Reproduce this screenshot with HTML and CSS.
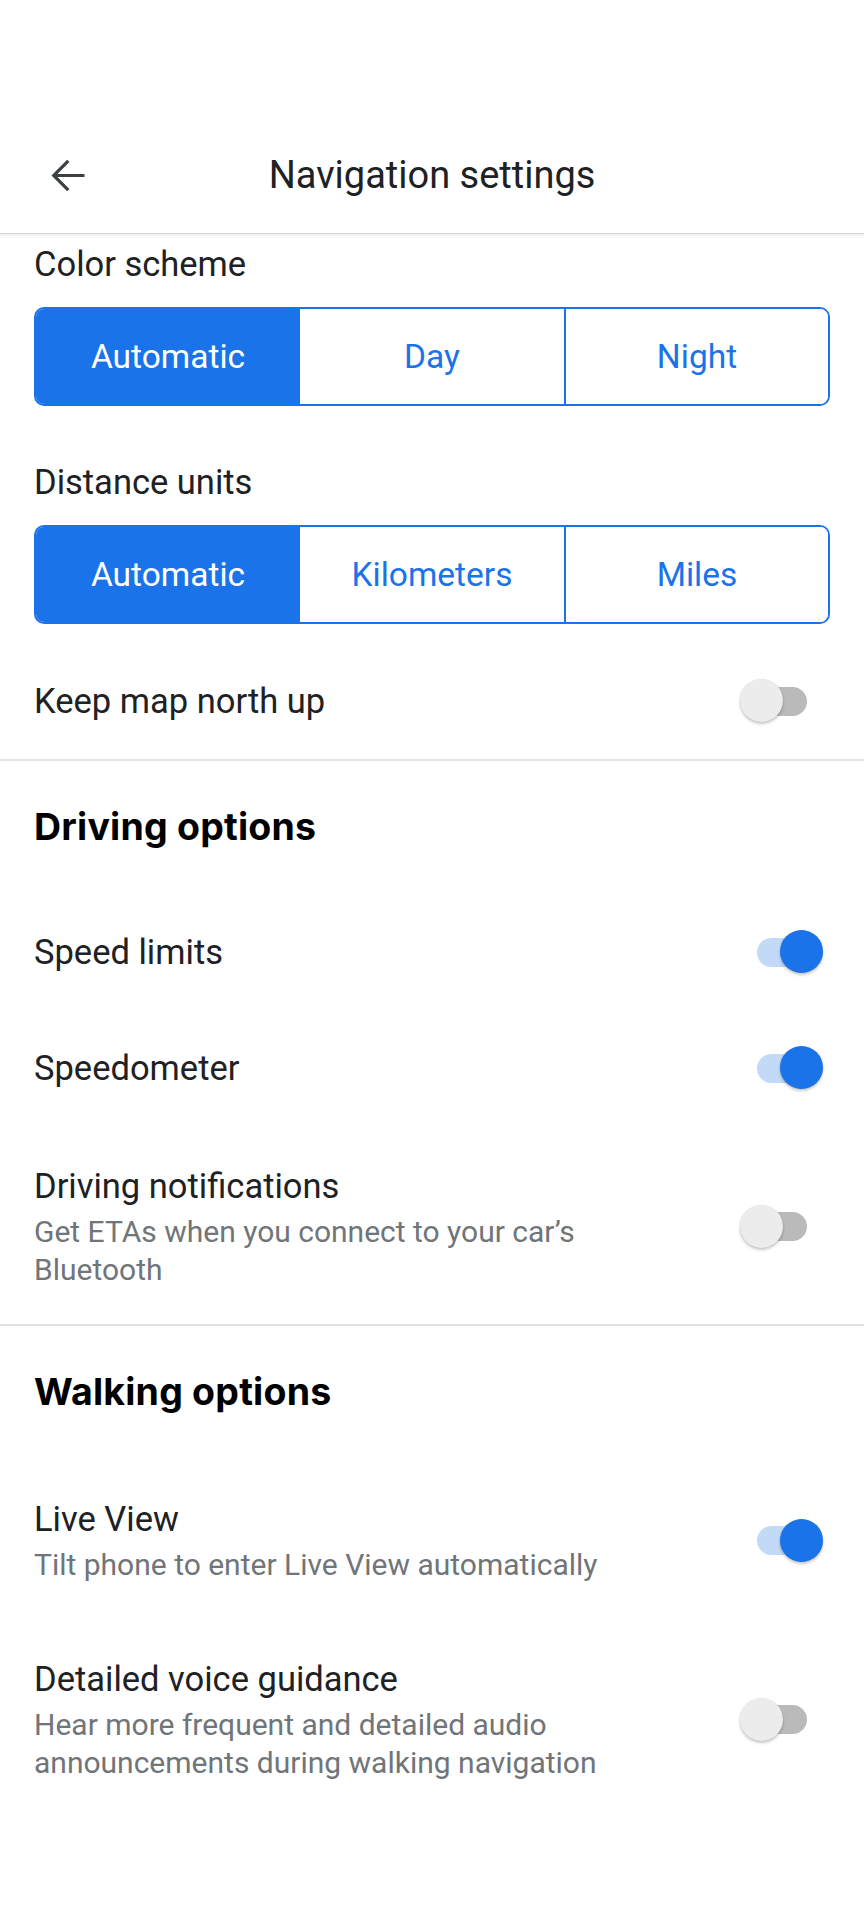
FILE: index.html
```html
<!DOCTYPE html>
<html lang="en">
<head>
<meta charset="utf-8">
<title>Navigation settings</title>
<link rel="stylesheet" href="styles.css">
</head>
<body>
<div class="screen">
  <div class="status-space"></div>
  <header class="app-bar">
    <button class="back" aria-label="Back">
      <svg viewBox="0 0 24 24" width="51" height="51"><path d="M20 11.25H7.3l5.6-5.6L11.85 4.6 4.45 12l7.4 7.4 1.05-1.05-5.6-5.6H20z" fill="#3c4043"/></svg>
    </button>
    <h1 class="title">Navigation settings</h1>
  </header>

  <section class="top">
    <div class="label">Color scheme</div>
    <div class="segmented">
      <div class="seg active">Automatic</div>
      <div class="seg">Day</div>
      <div class="seg">Night</div>
    </div>
    <div class="label label-2">Distance units</div>
    <div class="segmented">
      <div class="seg active">Automatic</div>
      <div class="seg">Kilometers</div>
      <div class="seg">Miles</div>
    </div>
  </section>

  <div class="row row-north">
    <div class="text"><div class="name">Keep map north up</div></div>
    <span class="switch"><span class="track"></span><span class="knob"></span></span>
  </div>

  <hr class="divider">

  <h2 class="heading">Driving options</h2>
  <div class="row simple">
    <div class="text"><div class="name">Speed limits</div></div>
    <span class="switch on"><span class="track"></span><span class="knob"></span></span>
  </div>
  <div class="row simple">
    <div class="text"><div class="name">Speedometer</div></div>
    <span class="switch on"><span class="track"></span><span class="knob"></span></span>
  </div>
  <div class="row multi">
    <div class="text">
      <div class="name">Driving notifications</div>
      <div class="sub">Get ETAs when you connect to your car’s Bluetooth</div>
    </div>
    <span class="switch"><span class="track"></span><span class="knob"></span></span>
  </div>

  <hr class="divider">

  <h2 class="heading">Walking options</h2>
  <div class="row multi live">
    <div class="text">
      <div class="name">Live View</div>
      <div class="sub">Tilt phone to enter Live View automatically</div>
    </div>
    <span class="switch on"><span class="track"></span><span class="knob"></span></span>
  </div>
  <div class="row multi">
    <div class="text">
      <div class="name">Detailed voice guidance</div>
      <div class="sub">Hear more frequent and detailed audio announcements during walking navigation</div>
    </div>
    <span class="switch"><span class="track"></span><span class="knob"></span></span>
  </div>
</div>
</body>
</html>
```

FILE: styles.css
```css
* { box-sizing: border-box; }
html, body { margin: 0; padding: 0; background: #ffffff; }
body {
  font-family: Roboto, "Noto Sans", "Liberation Sans", sans-serif;
  color: #202124;
  width: 864px;
  min-height: 1920px;
}
.screen { width: 864px; }
.status-space { height: 117px; }

.app-bar {
  position: relative;
  height: 117px;
  display: flex;
  align-items: center;
  justify-content: center;
  border-bottom: 1px solid #e4e4e4;
  z-index: 1;
}
.app-bar::after {
  content: "";
  position: absolute;
  left: 0;
  right: 0;
  top: 100%;
  height: 6px;
  background: linear-gradient(to bottom, rgba(0,0,0,0.07), rgba(0,0,0,0));
}
.back {
  position: absolute;
  left: 42px;
  top: 33px;
  width: 51px;
  height: 51px;
  padding: 0;
  border: 0;
  background: none;
  display: flex;
}
.title {
  margin: 0;
  font-weight: 400;
  font-size: 38px;
  line-height: 48px;
  color: #202124;
  letter-spacing: 0;
}

.top { padding: 8px 34px 0; }
.label {
  font-size: 34.5px;
  line-height: 44px;
  color: #202124;
}
.label-2 { margin-top: 54px; }
.segmented {
  margin-top: 21px;
  display: grid;
  grid-template-columns: repeat(3, 1fr);
  height: 99px;
  border: 2px solid #1a73e8;
  border-radius: 10px;
  overflow: hidden;
}
.seg {
  display: flex;
  align-items: center;
  justify-content: center;
  font-size: 33.5px;
  color: #1a73e8;
  background: #fff;
}
.seg + .seg { border-left: 2px solid #1a73e8; }
.seg.active { background: #1a73e8; color: #fff; }
.seg.active + .seg { border-left: 0; }

.row {
  display: flex;
  align-items: center;
  justify-content: space-between;
  padding-left: 34px;
  padding-right: 41px;
}
.row-north { padding-top: 55px; padding-bottom: 36px; }
.row.simple { padding-top: 38px; padding-bottom: 34px; }
.row.multi { padding-top: 40px; padding-bottom: 35px; }
.row.live { padding-bottom: 33px; }
.text { flex: 1; max-width: 580px; }
.name {
  font-size: 34.5px;
  line-height: 44px;
  color: #202124;
}
.sub {
  margin-top: 5px;
  font-size: 30px;
  line-height: 38px;
  color: #70757a;
}

.divider {
  margin: 0;
  border: 0;
  height: 2px;
  background: #e3e3e3;
}
.heading {
  margin: 0;
  padding: 42px 34px 41px;
  font-family: Inter, Roboto, "Liberation Sans", sans-serif;
  font-size: 37.5px;
  line-height: 48px;
  font-weight: 700;
  letter-spacing: 0.2px;
  color: #000;
}

.switch {
  position: relative;
  flex: none;
  width: 83px;
  height: 44px;
  display: flex;
  align-items: center;
}
.track {
  margin-left: 17px;
  width: 50px;
  height: 29px;
  border-radius: 15px;
  background: #bababa;
}
.knob {
  position: absolute;
  left: 0;
  top: 0;
  width: 43px;
  height: 43px;
  border-radius: 50%;
  background: #ececec;
  box-shadow: 0 2px 3px rgba(0,0,0,0.22), 0 0 1px rgba(0,0,0,0.12);
}
.switch.on .track { background: #c3d9f8; }
.switch.on .knob { left: 40px; background: #1a73e8; }
```
